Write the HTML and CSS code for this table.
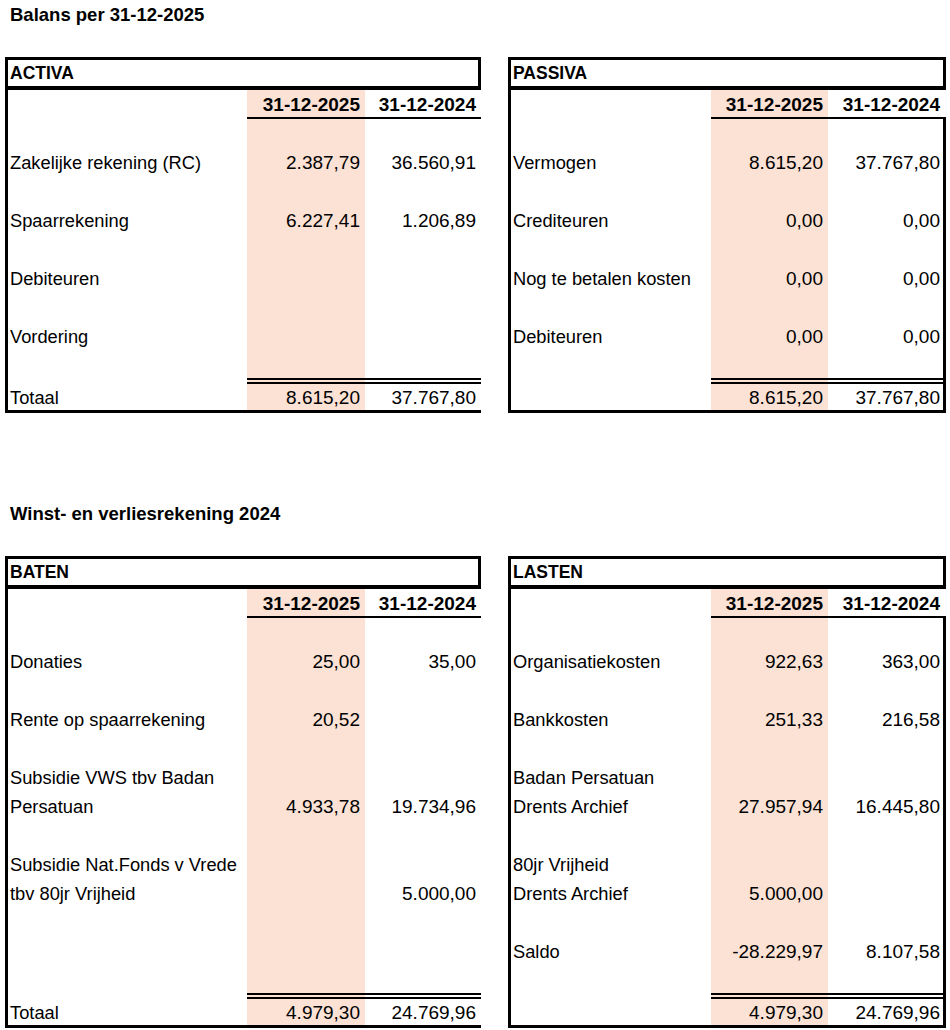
FILE: index.html
```html
<!DOCTYPE html>
<html lang="nl">

<head>
  <meta charset="UTF-8" />
  <meta name="viewport" content="width=device-width, initial-scale=1.0" />
  <title>Balans en winst- en verliesrekening</title>
  <link rel="stylesheet" href="styles.css">
</head>

<body>
  <div class="page">

    <!-- balans -->
    <section class="block">
      <h2 class="title">Balans per 31-12-2025</h2>
      <div class="pair">
        <div class="sheet sheet-left">
          <div class="sheet-title">ACTIVA</div>
          <div class="sheet-body">
            <div class="row head"><div></div><div class="n p">31-12-2025</div><div class="n">31-12-2024</div></div>
            <div class="rows">
              <div class="row"><div></div><div class="p"></div><div></div></div>
              <div class="row"><div class="l">Zakelijke rekening (RC)</div><div class="n p">2.387,79</div><div class="n">36.560,91</div></div>
              <div class="row"><div></div><div class="p"></div><div></div></div>
              <div class="row"><div class="l">Spaarrekening</div><div class="n p">6.227,41</div><div class="n">1.206,89</div></div>
              <div class="row"><div></div><div class="p"></div><div></div></div>
              <div class="row"><div class="l">Debiteuren</div><div class="n p"></div><div class="n"></div></div>
              <div class="row"><div></div><div class="p"></div><div></div></div>
              <div class="row"><div class="l">Vordering</div><div class="n p"></div><div class="n"></div></div>
              <div class="row short"><div></div><div class="p"></div><div></div></div>
              <div class="row total"><div class="l">Totaal</div><div class="n p">8.615,20</div><div class="n">37.767,80</div></div>
            </div>
          </div>
        </div>

        <div class="sheet sheet-right">
          <div class="sheet-title">PASSIVA</div>
          <div class="sheet-body">
            <div class="row head"><div></div><div class="n p">31-12-2025</div><div class="n">31-12-2024</div></div>
            <div class="rows">
              <div class="row"><div></div><div class="p"></div><div></div></div>
              <div class="row"><div class="l">Vermogen</div><div class="n p">8.615,20</div><div class="n">37.767,80</div></div>
              <div class="row"><div></div><div class="p"></div><div></div></div>
              <div class="row"><div class="l">Crediteuren</div><div class="n p">0,00</div><div class="n">0,00</div></div>
              <div class="row"><div></div><div class="p"></div><div></div></div>
              <div class="row"><div class="l">Nog te betalen kosten</div><div class="n p">0,00</div><div class="n">0,00</div></div>
              <div class="row"><div></div><div class="p"></div><div></div></div>
              <div class="row"><div class="l">Debiteuren</div><div class="n p">0,00</div><div class="n">0,00</div></div>
              <div class="row short"><div></div><div class="p"></div><div></div></div>
              <div class="row total"><div></div><div class="n p">8.615,20</div><div class="n">37.767,80</div></div>
            </div>
          </div>
        </div>
      </div>
    </section>

    <!-- winst en verlies -->
    <section class="block block-second">
      <h2 class="title">Winst- en verliesrekening 2024</h2>
      <div class="pair">
        <div class="sheet sheet-left">
          <div class="sheet-title">BATEN</div>
          <div class="sheet-body">
            <div class="row head"><div></div><div class="n p">31-12-2025</div><div class="n">31-12-2024</div></div>
            <div class="rows">
              <div class="row"><div></div><div class="p"></div><div></div></div>
              <div class="row"><div class="l">Donaties</div><div class="n p">25,00</div><div class="n">35,00</div></div>
              <div class="row"><div></div><div class="p"></div><div></div></div>
              <div class="row"><div class="l">Rente op spaarrekening</div><div class="n p">20,52</div><div class="n"></div></div>
              <div class="row"><div></div><div class="p"></div><div></div></div>
              <div class="row"><div class="l">Subsidie VWS tbv Badan</div><div class="p"></div><div></div></div>
              <div class="row"><div class="l">Persatuan</div><div class="n p">4.933,78</div><div class="n">19.734,96</div></div>
              <div class="row"><div></div><div class="p"></div><div></div></div>
              <div class="row"><div class="l">Subsidie Nat.Fonds v Vrede</div><div class="p"></div><div></div></div>
              <div class="row"><div class="l">tbv 80jr Vrijheid</div><div class="n p"></div><div class="n">5.000,00</div></div>
              <div class="row"><div></div><div class="p"></div><div></div></div>
              <div class="row"><div></div><div class="p"></div><div></div></div>
              <div class="row short"><div></div><div class="p"></div><div></div></div>
              <div class="row total"><div class="l">Totaal</div><div class="n p">4.979,30</div><div class="n">24.769,96</div></div>
            </div>
          </div>
        </div>

        <div class="sheet sheet-right">
          <div class="sheet-title">LASTEN</div>
          <div class="sheet-body">
            <div class="row head"><div></div><div class="n p">31-12-2025</div><div class="n">31-12-2024</div></div>
            <div class="rows">
              <div class="row"><div></div><div class="p"></div><div></div></div>
              <div class="row"><div class="l">Organisatiekosten</div><div class="n p">922,63</div><div class="n">363,00</div></div>
              <div class="row"><div></div><div class="p"></div><div></div></div>
              <div class="row"><div class="l">Bankkosten</div><div class="n p">251,33</div><div class="n">216,58</div></div>
              <div class="row"><div></div><div class="p"></div><div></div></div>
              <div class="row"><div class="l">Badan Persatuan</div><div class="p"></div><div></div></div>
              <div class="row"><div class="l">Drents Archief</div><div class="n p">27.957,94</div><div class="n">16.445,80</div></div>
              <div class="row"><div></div><div class="p"></div><div></div></div>
              <div class="row"><div class="l">80jr Vrijheid</div><div class="p"></div><div></div></div>
              <div class="row"><div class="l">Drents Archief</div><div class="n p">5.000,00</div><div class="n"></div></div>
              <div class="row"><div></div><div class="p"></div><div></div></div>
              <div class="row"><div class="l">Saldo</div><div class="n p">-28.229,97</div><div class="n">8.107,58</div></div>
              <div class="row short"><div></div><div class="p"></div><div></div></div>
              <div class="row total"><div></div><div class="n p">4.979,30</div><div class="n">24.769,96</div></div>
            </div>
          </div>
        </div>
      </div>
    </section>

  </div>
</body>

</html>
```

FILE: styles.css
```css
* {
  margin: 0;
  padding: 0;
  box-sizing: border-box;
}

body {
  font-family: "Liberation Sans", Arial, sans-serif;
  color: #000;
  background-color: #fff;
}

.page {
  padding: 0 4px 0 5px;
}

.block-second {
  margin-top: 86px;
}

.title {
  font-size: 18.5px;
  font-weight: bold;
  line-height: 30px;
  padding-left: 5px;
}

.pair {
  display: flex;
  gap: 27px;
  margin-top: 27px;
}

.sheet-left {
  width: 476px;
  --cols: 239px 118px 1fr;
}

.sheet-right {
  width: 438px;
  --cols: 200px 117px 1fr;
}

.sheet-title {
  height: 33px;
  border: 3px solid #000;
  border-bottom-width: 4px;
  padding-left: 2px;
  font-size: 17.5px;
  font-weight: bold;
  display: flex;
  align-items: center;
}

.sheet-body {
  border-left: 3px solid #000;
  border-bottom: 3px solid #000;
}

.sheet-right .rows {
  border-right: 3px solid #000;
}

.row {
  display: grid;
  grid-template-columns: var(--cols);
  height: 29px;
  font-size: 18.3px;
}

.row > div {
  display: flex;
  align-items: center;
  white-space: nowrap;
}

.row.head {
  font-size: 19px;
  font-weight: bold;
}

.row.head .n {
  border-bottom: 2px solid #000;
  padding-top: 2px;
}

.row.short {
  height: 27px;
}

.row.total {
  height: 32px;
}

.row.total .l {
  padding-top: 7px;
}

.row.total .n {
  border-top: 6px double #000;
  padding-top: 1px;
}

.l {
  padding-left: 2px;
}

.n {
  justify-content: flex-end;
  padding-right: 5px;
  font-size: 19px;
}

.sheet-right .head .n:last-child {
  padding-right: 6px;
}

.sheet-right .rows .n:last-child {
  padding-right: 3px;
}

.p {
  background-color: #fbe2d5;
}
```
